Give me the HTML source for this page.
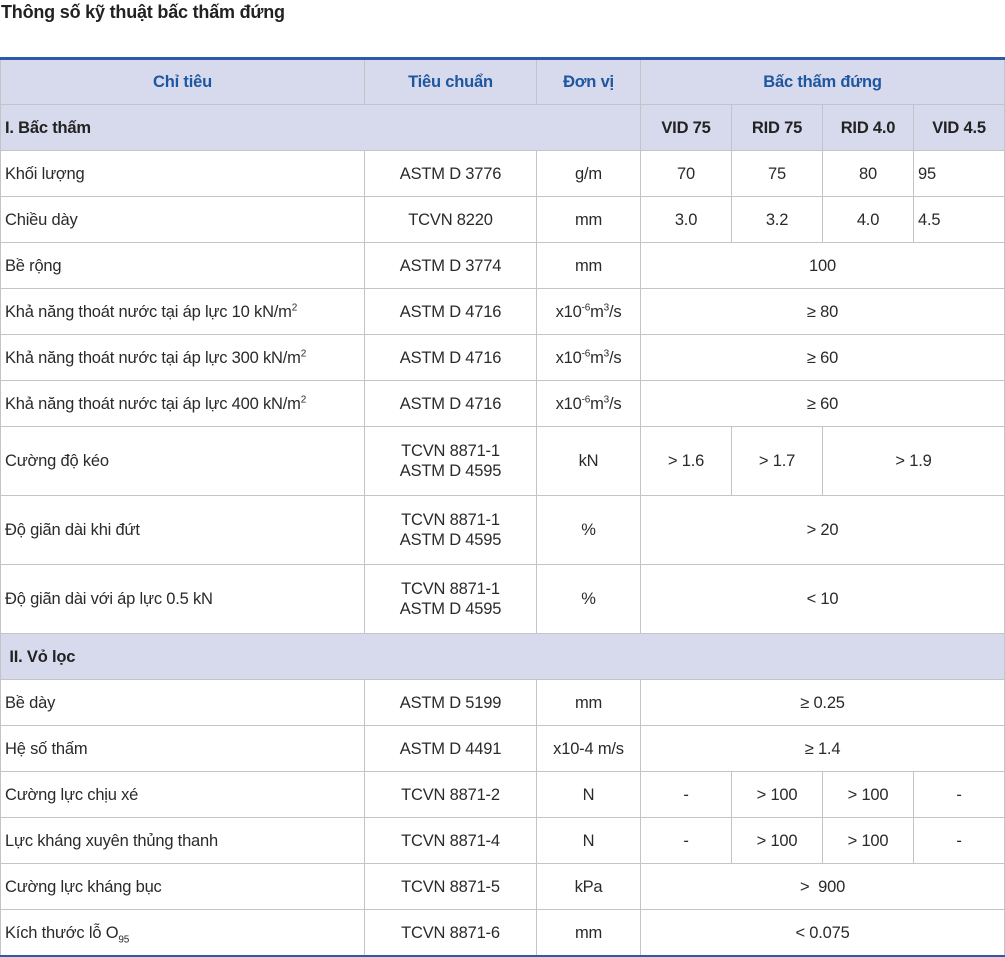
<!DOCTYPE html>
<html><head><meta charset="utf-8"><style>
body{margin:0;background:#fff;font-family:"Liberation Sans",sans-serif;color:#2a2a2a;width:1005px;height:957px;overflow:hidden}
h1{position:absolute;left:1px;top:0;margin:0;font-size:18px;font-weight:bold;color:#222;line-height:24px;letter-spacing:-0.2px}
table{position:absolute;left:0;top:57px;border-collapse:collapse;table-layout:fixed;width:1004px;border-top:3px solid #2b5aa8;font-size:16.5px}
td{border:1px solid #c4c4c8;text-align:center;padding:0;height:45px;line-height:20px;letter-spacing:-0.2px}
td.l{text-align:left;padding-left:4px}
tr.h td{background:#d6daec;color:#1e56a0;font-weight:bold;height:44px}
tr.s td{background:#d6daec;color:#222;font-weight:bold}
tr.t td{height:68px}
sup{font-size:10px;line-height:0}
sub{font-size:10px;line-height:0}
</style></head><body>
<h1>Thông số kỹ thuật bấc thấm đứng</h1>
<table>
<colgroup><col style="width:364px"><col style="width:172px"><col style="width:104px"><col style="width:91px"><col style="width:91px"><col style="width:91px"><col style="width:91px"></colgroup>
<tr class="h"><td>Chỉ tiêu</td><td>Tiêu chuẩn</td><td>Đơn vị</td><td colspan="4">Bấc thấm đứng</td></tr>
<tr class="s"><td class="l" colspan="3">I. Bấc thấm</td><td>VID 75</td><td>RID 75</td><td>RID 4.0</td><td>VID 4.5</td></tr>
<tr><td class="l">Khối lượng</td><td>ASTM D 3776</td><td>g/m</td><td>70</td><td>75</td><td>80</td><td class="l">95</td></tr>
<tr><td class="l">Chiều dày</td><td>TCVN 8220</td><td>mm</td><td>3.0</td><td>3.2</td><td>4.0</td><td class="l">4.5</td></tr>
<tr><td class="l">Bề rộng</td><td>ASTM D 3774</td><td>mm</td><td colspan="4">100</td></tr>
<tr><td class="l">Khả năng thoát nước tại áp lực 10 kN/m<sup>2</sup></td><td>ASTM D 4716</td><td>x10<sup>-6</sup>m<sup>3</sup>/s</td><td colspan="4">≥ 80</td></tr>
<tr><td class="l">Khả năng thoát nước tại áp lực 300 kN/m<sup>2</sup></td><td>ASTM D 4716</td><td>x10<sup>-6</sup>m<sup>3</sup>/s</td><td colspan="4">≥ 60</td></tr>
<tr><td class="l">Khả năng thoát nước tại áp lực 400 kN/m<sup>2</sup></td><td>ASTM D 4716</td><td>x10<sup>-6</sup>m<sup>3</sup>/s</td><td colspan="4">≥ 60</td></tr>
<tr class="t"><td class="l">Cường độ kéo</td><td>TCVN 8871-1<br>ASTM D 4595</td><td>kN</td><td>&gt; 1.6</td><td>&gt; 1.7</td><td colspan="2">&gt; 1.9</td></tr>
<tr class="t"><td class="l">Độ giãn dài khi đứt</td><td>TCVN 8871-1<br>ASTM D 4595</td><td>%</td><td colspan="4">&gt; 20</td></tr>
<tr class="t"><td class="l">Độ giãn dài với áp lực 0.5 kN</td><td>TCVN 8871-1<br>ASTM D 4595</td><td>%</td><td colspan="4">&lt; 10</td></tr>
<tr class="s"><td class="l" colspan="7">&nbsp;II. Vỏ lọc</td></tr>
<tr><td class="l">Bề dày</td><td>ASTM D 5199</td><td>mm</td><td colspan="4">≥ 0.25</td></tr>
<tr><td class="l">Hệ số thấm</td><td>ASTM D 4491</td><td>x10-4 m/s</td><td colspan="4">≥ 1.4</td></tr>
<tr><td class="l">Cường lực chịu xé</td><td>TCVN 8871-2</td><td>N</td><td>-</td><td>&gt; 100</td><td>&gt; 100</td><td>-</td></tr>
<tr><td class="l">Lực kháng xuyên thủng thanh</td><td>TCVN 8871-4</td><td>N</td><td>-</td><td>&gt; 100</td><td>&gt; 100</td><td>-</td></tr>
<tr><td class="l">Cường lực kháng bục</td><td>TCVN 8871-5</td><td>kPa</td><td colspan="4">&gt;&nbsp; 900</td></tr>
<tr><td class="l" style="border-bottom:2px solid #2b5aa8">Kích thước lỗ O<sub>95</sub></td><td style="border-bottom:2px solid #2b5aa8">TCVN 8871-6</td><td style="border-bottom:2px solid #2b5aa8">mm</td><td colspan="4" style="border-bottom:2px solid #2b5aa8">&lt; 0.075</td></tr>
</table>
</body></html>
